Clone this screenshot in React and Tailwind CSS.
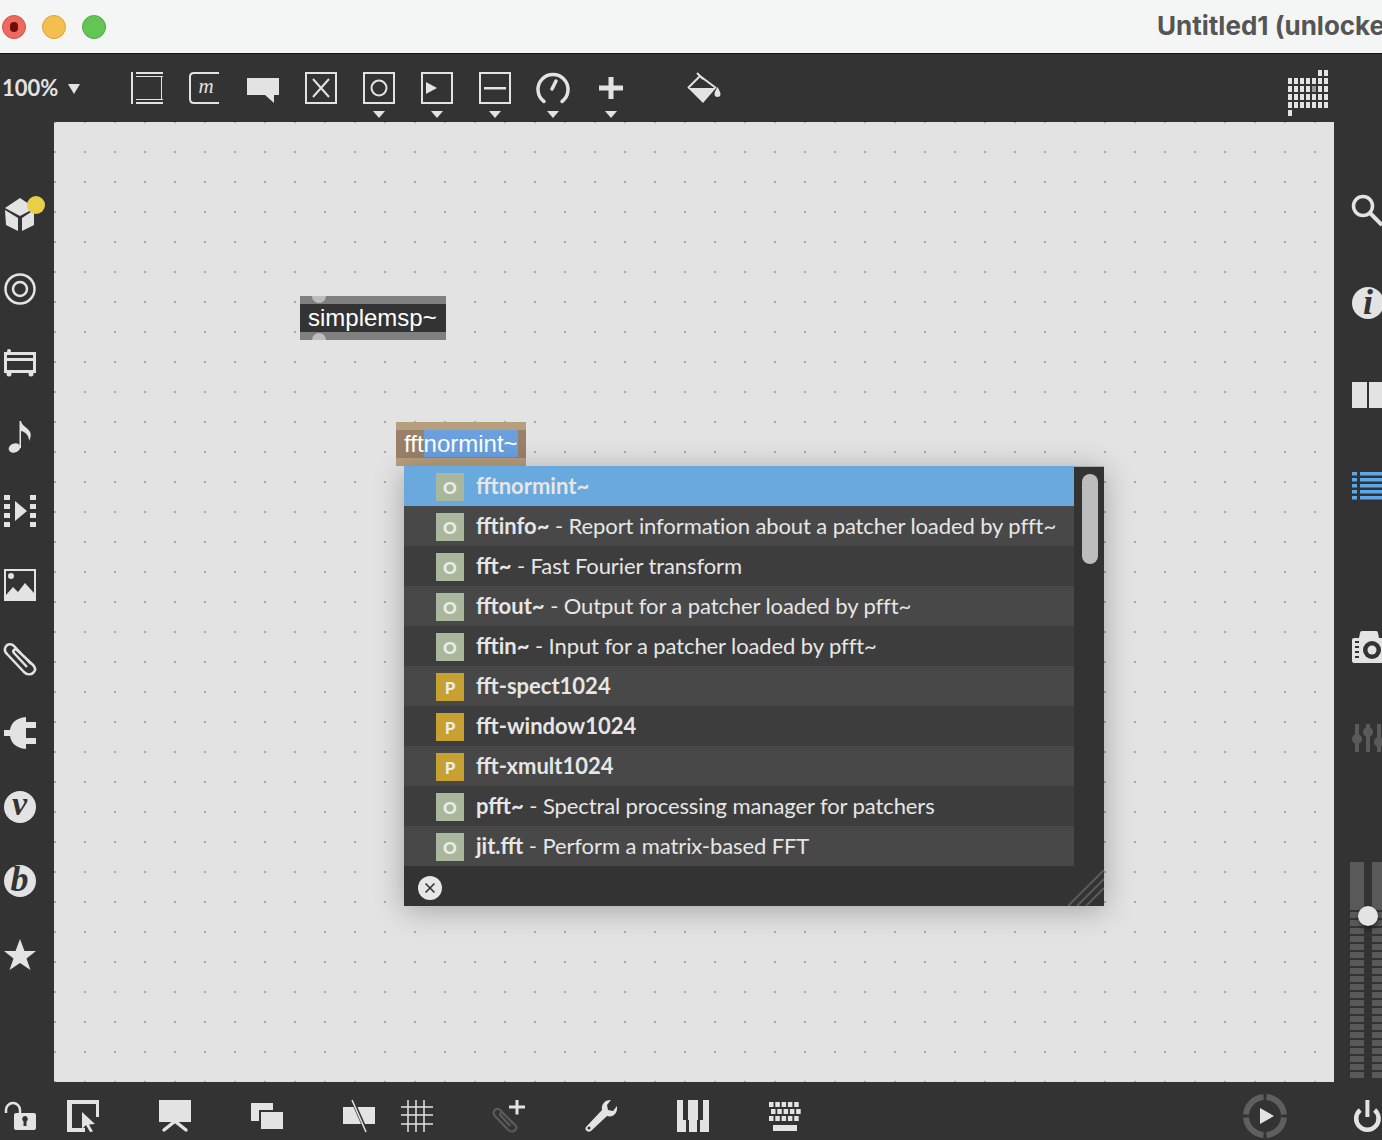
import { X } from "lucide-react";

const items = [
  { kind: "O", name: "fftnormint~", desc: "", selected: true },
  { kind: "O", name: "fftinfo~", desc: " - Report information about a patcher loaded by pfft~" },
  { kind: "O", name: "fft~", desc: " - Fast Fourier transform" },
  { kind: "O", name: "fftout~", desc: " - Output for a patcher loaded by pfft~" },
  { kind: "O", name: "fftin~", desc: " - Input for a patcher loaded by pfft~" },
  { kind: "P", name: "fft-spect1024", desc: "" },
  { kind: "P", name: "fft-window1024", desc: "" },
  { kind: "P", name: "fft-xmult1024", desc: "" },
  { kind: "O", name: "pfft~", desc: " - Spectral processing manager for patchers" },
  { kind: "O", name: "jit.fft", desc: " - Perform a matrix-based FFT" },
];

const Ico = ({ children, className = "" }) => (
  <svg viewBox="0 0 32 32" className={`w-8 h-8 shrink-0 overflow-visible fill-[#e3e3e3] ${className}`}>
    {children}
  </svg>
);

const Line = (props) => <path fill="none" stroke="#e3e3e3" strokeWidth="2" {...props} />;

// top toolbar
const PanelIcon = () => (
  <Ico>
    <path d="M0 0h2v32H0zM5 0h27v2H5zM5 4h27v1H5zM5 27h27v1H5zM5 30h27v2H5zM30 5h1v22h-1z" />
  </Ico>
);
const MessageIcon = () => (
  <Ico>
    <Line d="M30 1H5Q1 1 1 5v22q0 4 4 4h25" />
    <text x="17" y="21" textAnchor="middle" fontFamily="Liberation Serif" fontStyle="italic" fontSize="21">m</text>
  </Ico>
);
const CommentIcon = () => (
  <Ico>
    <path d="M0 6h32v17h-5v8l-9-8H0z" />
  </Ico>
);
const ToggleIcon = () => (
  <Ico>
    <Line d="M1 1h30v30H1z" />
    <Line d="M8 7l16 18M24 7L8 25" />
  </Ico>
);
const ButtonIcon = () => (
  <Ico>
    <Line d="M1 1h30v30H1z" />
    <circle cx="16" cy="16" r="7.500" fill="none" stroke="#e3e3e3" strokeWidth="2" />
  </Ico>
);
const PlayBoxIcon = () => (
  <Ico>
    <Line d="M1 1h30v30H1z" />
    <path d="M5 10l11 6-11 6z" />
  </Ico>
);
const SliderIcon = () => (
  <Ico>
    <Line d="M1 1h30v30H1z" />
    <path d="M5 15h22v2.500H5z" />
  </Ico>
);
const DialIcon = () => (
  <Ico>
    <Line strokeWidth="3.500" strokeLinecap="round" d="M7 29.500A15 15 0 1 1 25 29.500" />
    <Line strokeWidth="3.500" strokeLinecap="round" d="M15 17l4-8" />
  </Ico>
);
const PlusIcon = () => (
  <Ico>
    <path d="M13.500 5h5v8.500H28v5h-9.500V27h-5v-8.500H4v-5h9.500z" />
  </Ico>
);
const BucketIcon = () => (
  <svg viewBox="0 0 34 32" className="w-[34px] h-8 shrink-0 fill-[#e3e3e3]">
    <path d="M1 16h28L16 31z" />
    <path d="M1 16L13 4l16 12M10 1l6 6" fill="none" stroke="#e3e3e3" strokeWidth="2" />
    <path d="M30.500 15c1.500 3 3 5 3 7a3 3 0 0 1-6 0c0-2 1.500-4 3-7z" />
  </svg>
);

const Caret = ({ on }) => (
  <div className="flex flex-col items-center w-8">
    {on}
    <div className="mt-[7px] w-0 h-0 border-x-[6px] border-x-transparent border-t-[7px] border-t-[#e3e3e3]" />
  </div>
);

// left sidebar
const CubeIcon = () => (
  <svg viewBox="0 0 40 36" className="w-10 h-9 -mt-1 shrink-0 overflow-visible fill-[#e3e3e3]">
    <path d="M16 3l15 10-15 8L1 13zM1 15l13 8v13L2 30zM18 23l12-8v15l-12 6z" />
    <circle cx="32" cy="10" r="9" fill="#e8cf48" />
  </svg>
);
const TargetIcon = () => (
  <Ico>
    <circle cx="16" cy="16" r="14.500" fill="none" stroke="#e3e3e3" strokeWidth="2.500" />
    <circle cx="16" cy="16" r="7" fill="none" stroke="#e3e3e3" strokeWidth="2.500" />
  </Ico>
);
const RackIcon = () => (
  <Ico>
    <circle cx="5" cy="4" r="2" />
    <circle cx="5" cy="27" r="2.500" />
    <circle cx="27" cy="27" r="2.500" />
    <path d="M0 5h32v21H0zM3 8v3h26V8zM3 14v9h26v-9z" fillRule="evenodd" />
  </Ico>
);
const NoteIcon = () => (
  <Ico>
    <ellipse cx="10.500" cy="27" rx="6" ry="4.500" transform="rotate(-20 10.500 27)" />
    <path d="M15.500 0H17c.5 5 8 7 9.500 12 .8 3-.5 6-1.500 8 .3-4-2.500-9-8-10v17h-1.500z" />
  </Ico>
);
const FilmIcon = () => (
  <Ico>
    <path d="M0 0h6v5H0zM0 9h6v5H0zM0 18h6v5H0zM0 27h6v5H0zM26 0h6v5h-6zM26 9h6v5h-6zM26 18h6v5h-6zM26 27h6v5h-6zM11 6l12 10-12 10z" />
  </Ico>
);
const ImageIcon = () => (
  <Ico>
    <Line d="M1 1h30v30H1z" />
    <circle cx="7" cy="7" r="3" />
    <path d="M2 30v-4l7-8 5 5 7-9 9 10v6z" />
  </Ico>
);
const ClipPath = ({ color = "#e3e3e3", width = 2.5 }) => (
  <path
    fill="none"
    stroke={color}
    strokeWidth={width}
    d="M27 21L10 3C7 0 3 1 1.500 4 0 7 1 9 3 11l17 18c3 3 7 3 9.500.5C32 27 31 24 29 22L13 7c-2-2-5 1-3 3l13 14"
  />
);
const PlugIcon = () => (
  <Ico>
    <path d="M0 13h6C7 6 12 1 22 0v32C12 31 7 26 6 19H0zM22 5h10v6H22zM22 21h10v6H22z" />
  </Ico>
);
const LetterCircle = ({ letter, size = 34, y = 24, x = 15.5 }) => (
  <Ico>
    <circle cx="16" cy="16" r="16" />
    <text x={x} y={y} textAnchor="middle" fill="#333" fontFamily="Liberation Serif" fontStyle="italic" fontWeight="700" fontSize={size}>
      {letter}
    </text>
  </Ico>
);
const StarIcon = () => (
  <Ico>
    <path d="M16 0l4.500 12H32l-9.500 7.500L26.500 31 16 24 5.500 31l4-11.500L0 12h11.500z" />
  </Ico>
);

// right sidebar
const SearchIcon = () => (
  <Ico>
    <circle cx="11" cy="11" r="9.500" fill="none" stroke="#e3e3e3" strokeWidth="3.500" />
    <path d="M18 18l12 12" stroke="#e3e3e3" strokeWidth="4" />
  </Ico>
);
const BookIcon = () => (
  <Ico>
    <path d="M0 3h15v26H0zM17 3h15v26H17z" />
  </Ico>
);
const ListIcon = () => (
  <svg viewBox="0 0 32 32" className="w-8 h-8 shrink-0 fill-[#5fa8e8]">
    {[1, 7, 13, 19, 25].map((y) => (
      <g key={y}>
        <rect x="0" y={y} width="5" height="3.500" />
        <rect x="8" y={y} width="24" height="3.500" />
      </g>
    ))}
  </svg>
);
const CameraIcon = () => (
  <svg viewBox="0 0 32 32" className="w-8 h-8 shrink-0 fill-[#e3e3e3]">
    <path
      fillRule="evenodd"
      d="M2 7h5l1-5q0-2 2-2h14q2 0 2 2l1 5h5v25H2q-2 0-2-2V9q0-2 2-2zM3 10v2h4v-2zM3 15v2h4v-2zM3 20v2h4v-2zM3 25v2h4v-2z"
    />
    <circle cx="20" cy="19" r="9" fill="#333" />
    <circle cx="20" cy="19" r="4.500" />
  </svg>
);
const MixerIcon = () => (
  <svg viewBox="0 0 32 30" className="w-8 h-[30px] shrink-0 fill-[#5a5a5a]">
    <path d="M3 1h4v28H3zM14 1h4v28h-4zM25 1h4v28h-4z" />
    <circle cx="5" cy="16" r="5" />
    <circle cx="16" cy="9" r="5" />
    <circle cx="27" cy="19" r="5" />
  </svg>
);

const Fader = () => (
  <div className="relative mt-[109px] -ml-0.5 flex gap-2">
    {[0, 1].map((c) => (
      <div key={c} className="w-3.5 shrink-0 flex flex-col gap-0.5">
        <div className="h-12 bg-[#595959]" />
        {Array.from({ length: 21 }).map((_, i) => (
          <div key={i} className="h-1.5 bg-[#595959]" />
        ))}
      </div>
    ))}
    <div className="absolute left-2 top-11 w-5 h-5 rounded-full bg-[#e3e3e3] shadow-[1px_3px_5px_rgba(0,0,0,0.45)]" />
  </div>
);

// bottom bar
const LockIcon = () => (
  <Ico>
    <path d="M2 13V10a7 7 0 0 1 14 0v3" fill="none" stroke="#e3e3e3" strokeWidth="2.500" />
    <path fillRule="evenodd" d="M12 13h18q2 0 2 2v13q0 2-2 2H12q-2 0-2-2V15q0-2 2-2zM21 16a3 3 0 0 0-1.500 5.500V26h3v-4.500A3 3 0 0 0 21 16z" />
  </Ico>
);
const SelectIcon = () => (
  <Ico>
    <path d="M0 0h32v17h-3V4H5v24h13v4H0z" />
    <path d="M15 12l13 12-6 .5 4 7-3 .5-4-7-4 4z" />
  </Ico>
);
const PresentIcon = () => (
  <Ico>
    <path d="M0 0h32v22H0z" />
    <path d="M15 22L5 30M17 22l10 8" stroke="#e3e3e3" strokeWidth="3.500" strokeLinecap="round" fill="none" />
  </Ico>
);
const StackIcon = () => (
  <Ico>
    <path d="M0 3h22v7H8v11H0z" />
    <path d="M10 12h22v17H10z" />
  </Ico>
);
const MuteIcon = () => (
  <Ico>
    <path d="M0 7h10.500L18 24H0zM14.500 7H32v17H22z" />
    <path d="M9 0l14 32" stroke="#e3e3e3" strokeWidth="1.500" />
  </Ico>
);
const GridIcon = () => (
  <Ico>
    <path d="M7 0v32M15 0v32M23 0v32M0 7h32M0 15h32M0 24h32" stroke="#e3e3e3" strokeWidth="1.500" fill="none" />
  </Ico>
);
const ClipAddIcon = () => (
  <Ico className="fill-[#5a5a5a]">
    <g transform="translate(0 8) scale(.75)">
      <ClipPath color="#5a5a5a" width={3} />
    </g>
    <path d="M22.500 0h3v5.500H32v3h-6.500v6h-3v-6H16v-3h6.500z" />
  </Ico>
);
const WrenchIcon = () => (
  <Ico>
    <path d="M1 27L17 10C16 5 19 0 26 0l-4 5 1 5 5 1 4-5c1 7-4 12-10 10L6 31c-3 2-7-1-5-4z" />
    <circle cx="4" cy="28" r="1.500" fill="#333" />
  </Ico>
);
const PianoIcon = () => (
  <Ico>
    <path d="M0 0h6v20h3v12H0zM11 0h10v20h-1v12h-8V20h-1zM26 0h6v32h-9V20h3z" />
  </Ico>
);
const KeyboardIcon = () => (
  <svg viewBox="0 0 32 32" className="w-8 h-8 shrink-0 fill-[#e3e3e3]">
    {[2, 9, 16].map((y, r) =>
      [0, 1, 2, 3, 4].map((i) => (
        <rect key={`${r}${i}`} x={(r === 1 ? 2 : 0) + i * 6.3} y={y} width="4.500" height="5" />
      ))
    )}
    <path d="M4 25h24v6H4z" />
  </svg>
);
const RunIcon = () => (
  <svg viewBox="0 0 44 44" className="w-11 h-11 shrink-0">
    <g fill="none" stroke="#5f5f5f" strokeWidth="6">
      <path d="M20.500 3A19 19 0 0 0 3 20.500" />
      <path d="M23.500 3A19 19 0 0 1 41 20.500" />
      <path d="M41 23.500A19 19 0 0 1 23.500 41" />
      <path d="M20.500 41A19 19 0 0 1 3 23.500" />
    </g>
    <path d="M17 14l14 8-14 8z" fill="#e3e3e3" />
  </svg>
);
const PowerIcon = () => (
  <Ico>
    <path d="M7.200 10a11.200 11.200 0 1 0 14.400 0" fill="none" stroke="#e3e3e3" strokeWidth="4.500" />
    <path d="M12.400 0h4v17h-4z" />
  </Ico>
);

const DotGrid = () => {
  const cells = [];
  for (let r = 0; r < 6; r++) {
    for (let c = 0; c < 7; c++) {
      if (r === 0 && c < 5) continue;
      if (r === 5 && c > 0) continue;
      cells.push(
        <rect key={`${r}-${c}`} x={c * 6} y={r * 8} width="4" height="6" fill={r === 2 && c === 4 ? "#999" : "#e3e3e3"} />
      );
    }
  }
  return (
    <svg viewBox="0 0 40 46" className="w-10 h-[46px] shrink-0 -mt-0.5">
      {cells}
    </svg>
  );
};

const Row = ({ item, index }) => {
  const rowBg = item.selected ? "bg-[#6aa9dd]" : index % 2 === 1 ? "bg-[#484848]" : "bg-[#3d3d3d]";
  const chipBg = item.kind === "P" ? "bg-[#c6a030]" : "bg-[#a9b79d]";
  return (
    <div className={`h-10 flex items-center pl-8 ${rowBg}`}>
      <div className={`w-7 h-7 mt-0.5 pt-0.5 shrink-0 flex items-center justify-center text-[#ececec] text-[17px] font-black ${chipBg}`}>
        {item.kind}
      </div>
      <div className="ml-3 text-[22px] leading-none text-[#e6e6e6] whitespace-pre">
        <span className="font-bold">{item.name}</span>
        <span className="tracking-[-0.1px]">{item.desc}</span>
      </div>
    </div>
  );
};

const Popup = () => (
  <div className="absolute left-[350px] top-[344px] w-[700px] h-[440px] bg-[#333] border-t border-[#aaa] shadow-[0_4px_28px_rgba(0,0,0,0.28)] font-[Lato,sans-serif]">
    <div className="flex h-[400px] -mt-px">
      <div className="w-[670px]">
        {items.map((item, i) => (
          <Row key={item.name} item={item} index={i} />
        ))}
      </div>
      <div className="flex-1 pl-2 pt-2">
        <div className="w-4 h-[90px] rounded-full bg-[#bdbdbd]" />
      </div>
    </div>
    <div className="h-10 flex items-center pl-[14px] pt-1">
      <div className="w-6 h-6 rounded-full bg-[#e6e6e6] flex items-center justify-center">
        <X size={16} strokeWidth={2.500} color="#333" />
      </div>
    </div>
    <svg viewBox="0 0 36 36" className="absolute right-0 bottom-0 w-9 h-9">
      <path d="M0 36L36 0M9 36L36 9M18 36L36 18" stroke="#5a5a5a" strokeWidth="2" />
    </svg>
  </div>
);

const PatchBox = ({ className, children }) => (
  <div className={`absolute h-11 flex flex-col font-[Liberation_Sans,Arial,sans-serif] ${className}`}>{children}</div>
);

const App = () => {
  return (
    <div className="w-[1382px] h-[1140px] overflow-hidden bg-[#333] flex flex-col">
      {/* Title bar */}
      <div className="h-[54px] shrink-0 bg-[#f4f6f5] border-b border-[#111] flex items-center">
        <div className="flex gap-4 ml-0.5">
          <div className="w-6 h-6 rounded-full bg-[#ee6a5f] border border-[#d0544a] flex items-center justify-center">
            <div className="w-2 h-2.5 rounded-full bg-[#6e0f0a]" />
          </div>
          <div className="w-6 h-6 rounded-full bg-[#f5bf4f] border border-[#d9a33c]" />
          <div className="w-6 h-6 rounded-full bg-[#62c554] border border-[#4fa941]" />
        </div>
        <div className="ml-[1051px] -mt-0.5 text-[26px] font-bold text-[#555] whitespace-nowrap font-[Inter,sans-serif]">
          Untitled1 (unlocked)
        </div>
      </div>

      {/* Top toolbar */}
      <div className="h-[68px] shrink-0 flex items-start pt-[18px] pl-0.5">
        <div className="text-[22px] leading-8 font-bold text-[#e3e3e3] font-[Lato,sans-serif] w-[66px]">100%</div>
        <div className="w-0 h-0 mt-3 border-x-[6px] border-x-transparent border-t-[10px] border-t-[#e3e3e3]" />
        <div className="ml-[51px] flex items-start gap-[26px]">
          <PanelIcon />
          <MessageIcon />
          <CommentIcon />
          <ToggleIcon />
          <Caret on={<ButtonIcon />} />
          <Caret on={<PlayBoxIcon />} />
          <Caret on={<SliderIcon />} />
          <Caret on={<DialIcon />} />
          <Caret on={<PlusIcon />} />
        </div>
        <div className="ml-[60px]">
          <BucketIcon />
        </div>
        <div className="ml-[567px]">
          <DotGrid />
        </div>
      </div>

      {/* Middle */}
      <div className="flex h-[960px] shrink-0">
        <div className="w-[54px] shrink-0 flex flex-col gap-[42px] pl-1 pt-[77px]">
          <CubeIcon />
          <TargetIcon />
          <RackIcon />
          <NoteIcon />
          <FilmIcon />
          <ImageIcon />
          <Ico>
            <ClipPath />
          </Ico>
          <PlugIcon />
          <LetterCircle letter="v" />
          <LetterCircle letter="b" size={36} y={26} />
          <StarIcon />
        </div>

        <div className="relative w-[1280px] shrink-0 bg-[#e3e3e3] bg-[radial-gradient(circle,#a8a8a8_0.9px,transparent_1.2px)] bg-[size:30px_30px] bg-[position:-14px_-15px]">
          <PatchBox className="left-[246px] top-[174px] w-[146px] bg-[#808080] overflow-hidden">
            <div className="absolute left-3 -top-[7px] w-3.5 h-3.5 rounded-full bg-[#bdbdbd]" />
            <div className="absolute left-3 -bottom-[7px] w-3.5 h-3.5 rounded-full bg-[#bdbdbd]" />
            <div className="mt-2 h-7 bg-[#333] pl-2 text-2xl leading-7 text-white">simplemsp~</div>
          </PatchBox>

          <PatchBox className="left-[342px] top-[300px] w-[130px] bg-[#b69f7c]">
            <div className="mt-2 h-7 bg-[#9a8069] pl-2 text-2xl leading-7 text-white whitespace-nowrap">
              fft<span className="bg-[#6aa0e0]">normint~</span>
            </div>
          </PatchBox>

          <Popup />
        </div>

        <div className="flex-1 flex flex-col pl-[18px] pt-[73px] overflow-hidden">
          <SearchIcon />
          <div className="mt-[60px]">
            <LetterCircle letter="i" size={36} y={27} x={16} />
          </div>
          <div className="mt-[60px]">
            <BookIcon />
          </div>
          <div className="mt-[60px]">
            <ListIcon />
          </div>
          <div className="mt-[128px]">
            <CameraIcon />
          </div>
          <div className="mt-[60px]">
            <MixerIcon />
          </div>
          <Fader />
        </div>
      </div>

      {/* Bottom bar */}
      <div className="h-[58px] shrink-0 flex items-center pt-2.5 pl-1">
        <LockIcon />
        <div className="ml-[31px]"><SelectIcon /></div>
        <div className="ml-[60px]"><PresentIcon /></div>
        <div className="ml-[60px]"><StackIcon /></div>
        <div className="ml-[60px]"><MuteIcon /></div>
        <div className="ml-[26px]"><GridIcon /></div>
        <div className="ml-[60px]"><ClipAddIcon /></div>
        <div className="ml-[60px]"><WrenchIcon /></div>
        <div className="ml-[60px]"><PianoIcon /></div>
        <div className="ml-[60px]"><KeyboardIcon /></div>
        <div className="ml-[442px]"><RunIcon /></div>
        <div className="ml-[66px]"><PowerIcon /></div>
      </div>
    </div>
  );
};

export default App;
